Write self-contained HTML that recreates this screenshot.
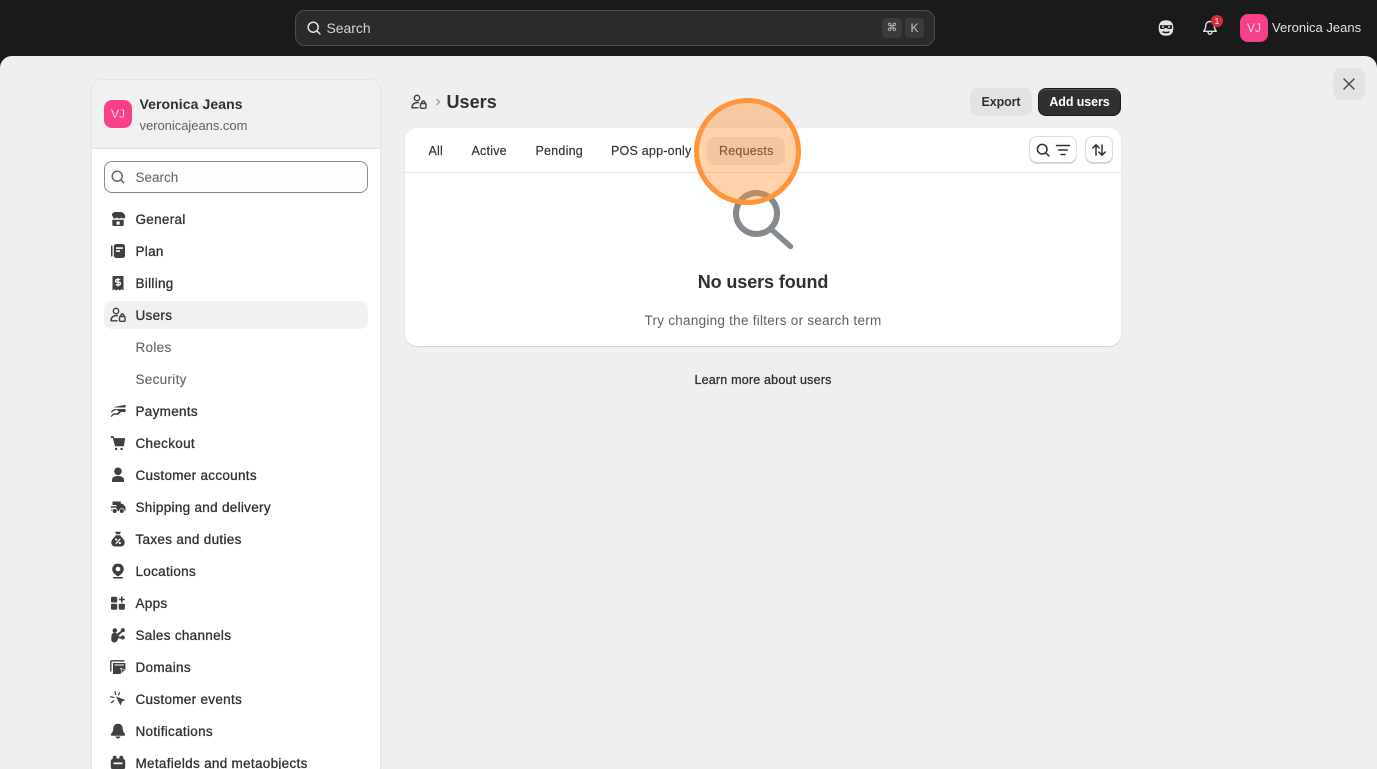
<!DOCTYPE html>
<html><head><meta charset="utf-8">
<style>
*{box-sizing:border-box}
html,body{margin:0;padding:0;width:1377px;height:769px;overflow:hidden;background:#1a1a1a;font-family:"Liberation Sans",sans-serif;color:#303030}
#r{position:relative;width:1377px;height:769px;overflow:hidden;background:#1a1a1a}
.a{position:absolute}
.t{position:absolute;white-space:nowrap;line-height:16px;font-size:13px;letter-spacing:.28px;font-weight:400}
.nav{position:absolute;left:135.5px;white-space:nowrap;font-size:13.5px;line-height:16px;letter-spacing:.3px;color:#303030;-webkit-text-stroke:.3px #303030}
.sub{color:#616161;-webkit-text-stroke:.1px #616161}
.tab{font-size:12.5px;letter-spacing:.22px;color:#303030;top:143px;-webkit-text-stroke:.15px #303030}
svg{position:absolute;display:block}
</style></head>
<body><div id="r">
<!-- top bar -->
<div class="a" style="left:295px;top:10px;width:640px;height:36px;background:#2b2b2b;border:1px solid #4a4a4a;border-radius:10px"></div>
<svg style="left:306px;top:20px" width="16" height="16" viewBox="0 0 16 16" fill="none" stroke="#e3e3e3" stroke-width="1.5" stroke-linecap="round"><circle cx="7.2" cy="7.2" r="5"/><path d="M11 11l3 3"/></svg>
<div class="t" style="left:326.5px;top:20px;color:#d4d4d4;font-size:14px;letter-spacing:-.05px">Search</div>
<div class="a" style="left:882px;top:18px;width:20px;height:20px;background:#3b3b3b;border-radius:4px;color:#c4c4c4;font-size:11px;line-height:20px;text-align:center;font-family:'DejaVu Sans',sans-serif">⌘</div>
<div class="a" style="left:905px;top:18px;width:19px;height:20px;background:#3b3b3b;border-radius:4px;color:#c4c4c4;font-size:12px;line-height:20px;text-align:center">K</div>
<svg style="left:1157px;top:19px" width="18" height="18" viewBox="0 0 18 18"><path d="M9 1.200c4.800 0 7.300 2.400 7.300 7.800s-2.500 7.800-7.300 7.800-7.300-2.400-7.300-7.800S4.200 1.200 9 1.200z" fill="#e3e3e3"/><path d="M3 6.300h12v2.300c0 .8-.6 1.400-1.400 1.400h-2.200c-1 0-1.500-1.200-2.400-1.200s-1.400 1.200-2.400 1.200H4.400C3.600 10 3 9.400 3 8.600z" fill="#1a1a1a"/><circle cx="6" cy="8" r="1" fill="#e3e3e3"/><circle cx="12" cy="8" r="1" fill="#e3e3e3"/><path d="M5.500 12.800c2.300 1 4.700 1 7 0" fill="none" stroke="#1a1a1a" stroke-width="1.400"/></svg>
<svg style="left:1202px;top:20px" width="16" height="16" viewBox="0 0 16 16" fill="none" stroke="#e3e3e3" stroke-width="1.400" stroke-linejoin="round"><path d="M8 1.500c-2.800 0-4.300 2-4.300 4.500 0 2.500-1 4-2 5.300h12.600c-1-1.300-2-2.800-2-5.300 0-2.500-1.500-4.500-4.300-4.500z"/><path d="M6 12c0 3 4 3 4 0"/></svg>
<div class="a" style="left:1211px;top:15px;width:12px;height:12px;border-radius:50%;background:#d72c3d;color:#fff;font-size:8.5px;line-height:12px;text-align:center">1</div>
<div class="a" style="left:1240px;top:14px;width:28px;height:28px;border-radius:8px;background:#f8408a;color:#ffd9e8;font-size:12px;line-height:28px;text-align:center">VJ</div>
<div class="t" style="left:1272px;top:20px;color:#e3e3e3;letter-spacing:.02px">Veronica Jeans</div>

<!-- main surface -->
<div class="a" style="left:0;top:56px;width:1377px;height:713px;background:#efefef;border-radius:12px 12px 0 0"></div>
<div class="a" style="left:1333px;top:68px;width:32px;height:32px;border-radius:8px;background:#e3e3e3"></div>
<svg style="left:1341px;top:76px" width="16" height="16" viewBox="0 0 16 16" stroke="#4a4a4a" stroke-width="1.500" stroke-linecap="round"><path d="M3 3l10 10M13 3L3 13"/></svg>

<!-- sidebar -->
<div class="a" style="left:91px;top:79px;width:290px;height:700px;background:#fff;border:1px solid #e3e3e3;border-radius:12px;overflow:hidden">
<div style="height:69px;background:#f0f0f0;border-bottom:1px solid #dedede"></div>
</div>
<div class="a" style="left:104px;top:100px;width:28px;height:28px;border-radius:8px;background:#f8408a;color:#ffd0e2;font-size:12px;line-height:28px;text-align:center">VJ</div>
<div class="t" style="left:139.5px;top:96px;font-size:14px;font-weight:700;letter-spacing:.08px;color:#303030">Veronica Jeans</div>
<div class="t" style="left:139.5px;top:118px;color:#616161;font-size:13px;letter-spacing:-.03px">veronicajeans.com</div>
<div class="a" style="left:104px;top:161px;width:264px;height:32px;background:#fdfdfd;border:1px solid #8a8a8a;border-radius:8px"></div>
<svg style="left:110px;top:169px" width="16" height="16" viewBox="0 0 16 16" fill="none" stroke="#616161" stroke-width="1.400" stroke-linecap="round"><circle cx="7.200" cy="7.200" r="5"/><path d="M11 11l2.700 2.700"/></svg>
<div class="t" style="left:135.5px;top:169.5px;color:#616161;font-size:13.5px;letter-spacing:0">Search</div>
<div class="a" style="left:104px;top:301px;width:264px;height:28px;background:#f1f1f1;border-radius:8px"></div>

<div class="nav" style="top:211.500px">General</div>
<div class="nav" style="top:243.500px">Plan</div>
<div class="nav" style="top:275.500px">Billing</div>
<div class="nav" style="top:307.500px">Users</div>
<div class="nav sub" style="top:339.500px">Roles</div>
<div class="nav sub" style="top:371.500px">Security</div>
<div class="nav" style="top:403.500px">Payments</div>
<div class="nav" style="top:435.500px">Checkout</div>
<div class="nav" style="top:467.500px">Customer accounts</div>
<div class="nav" style="top:499.500px">Shipping and delivery</div>
<div class="nav" style="top:531.500px">Taxes and duties</div>
<div class="nav" style="top:563.500px">Locations</div>
<div class="nav" style="top:595.500px">Apps</div>
<div class="nav" style="top:627.500px">Sales channels</div>
<div class="nav" style="top:659.500px">Domains</div>
<div class="nav" style="top:691.500px">Customer events</div>
<div class="nav" style="top:723.500px">Notifications</div>
<div class="nav" style="top:755.500px">Metafields and metaobjects</div>

<!-- sidebar icons -->
<svg style="left:110px;top:211px" width="16" height="16" viewBox="0 0 16 16" fill="#404040"><path d="M5.500 1h5c2.700 0 4.800 2.400 4.800 4.800 0 1-.8 1.700-1.800 1.700-.8 0-1.500-.4-1.900-1-.5.600-1.400 1-2.400 1s-1.900-.4-2.400-1c-.5.600-1.200 1-2 1-1.100 0-1.900-.7-1.900-1.700C.7 3.400 2.800 1 5.500 1z"/><path d="M2.300 8.800h11.400v5.100c0 .6-.5 1.100-1.100 1.100H3.400c-.6 0-1.100-.5-1.100-1.100z"/><rect x="6.500" y="10.500" width="3.200" height="3.200" fill="#fff"/></svg>
<svg style="left:110px;top:243px" width="16" height="16" viewBox="0 0 16 16" fill="#404040"><rect x="1" y="2.500" width="1.500" height="11" rx=".6"/><rect x="3.800" y="1" width="11.200" height="14" rx="2.500"/><rect x="6" y="4.300" width="7" height="1.600" fill="#fff"/><rect x="6" y="7.300" width="4" height="1.600" fill="#fff"/></svg>
<svg style="left:110px;top:275px" width="16" height="16" viewBox="0 0 16 16" fill="#404040"><path d="M2.500 1h11v14.500l-1.900-1.300-1.800 1.300-1.800-1.300-1.800 1.300-1.800-1.300-1.900 1.300z"/><path d="M10.300 4.500H7a1.300 1.300 0 0 0 0 2.700h2a1.300 1.300 0 0 1 0 2.700H5.700M8 3v8.500" fill="none" stroke="#fff" stroke-width="1.300"/></svg>
<svg style="left:110px;top:307px" width="16" height="16" viewBox="0 0 16 16" fill="none" stroke="#404040" stroke-width="1.400" stroke-linecap="round" stroke-linejoin="round"><circle cx="6" cy="4" r="2.700"/><path d="M1 13.800c0-3.200 2-5.300 6.500-5.300M1 13.800h6"/><rect x="9.500" y="9.500" width="5.500" height="4.800" rx="1"/><path d="M10.800 9.500V8.500a1.500 1.500 0 0 1 3 0v1"/></svg>
<svg style="left:110px;top:403px" width="16" height="16" viewBox="0 0 16 16" fill="#404040"><path d="M3 4.200L15.500 1.800v2.700H8z"/><path d="M5.500 6h10v3H11L8 11.800H4L1.500 14 .7 13 3.500 10.300h3.700L9 8.500"/><path d="M1 9.200C2 7 3.500 6 6 6l-.5 1.500C4 7.500 3 8 2 9.800z"/></svg>
<svg style="left:110px;top:435px" width="16" height="16" viewBox="0 0 16 16" fill="#404040"><path d="M.8 1.300h2.600l.8 1.800h11l-1.400 8.200H5L2.800 3H.8z"/><rect x="5" y="12.900" width="2.200" height="2"/><rect x="10.500" y="12.900" width="2.200" height="2"/></svg>
<svg style="left:110px;top:467px" width="16" height="16" viewBox="0 0 16 16" fill="#404040"><circle cx="8" cy="4.300" r="3.800"/><path d="M2 15v-1.700C2 10.300 4.500 9 8 9s6 1.300 6 4.300V15z"/></svg>
<svg style="left:110px;top:499px" width="16" height="16" viewBox="0 0 16 16" fill="#404040"><path d="M2.500 2.500h8.300v2.200h2l2.700 3.300v4H1.500V10h5V8.800H.8V7.200h5.700V6h-4z"/><circle cx="4.700" cy="12" r="2.400" stroke="#fff" stroke-width=".8"/><circle cx="11.800" cy="12" r="2.400" stroke="#fff" stroke-width=".8"/></svg>
<svg style="left:110px;top:531px" width="16" height="16" viewBox="0 0 16 16" fill="#404040"><path d="M5 .8h6L9.800 3.200H6.200z"/><path d="M5.800 4.200h4.400l1.500 2c1.800 1.700 3 3.500 3 5.300 0 2.300-1.700 4-3.800 4H5.100c-2.100 0-3.800-1.700-3.800-4 0-1.800 1.200-3.600 3-5.300z"/><path d="M5.800 12.800l4.400-5" stroke="#fff" stroke-width="1.200"/><circle cx="6.200" cy="8.500" r="1.100" fill="#fff"/><circle cx="9.800" cy="12" r="1.100" fill="#fff"/></svg>
<svg style="left:110px;top:563px" width="16" height="16" viewBox="0 0 16 16" fill="#404040"><path d="M8 .6c3.400 0 5.800 2.400 5.800 5.500 0 2.900-2.700 5.400-5.800 7.400-3.100-2-5.800-4.500-5.800-7.400C2.200 3 4.600.6 8 .6z"/><circle cx="8" cy="6" r="2.300" fill="#fff"/><rect x="2.800" y="14" width="10.400" height="1.500" rx=".7"/></svg>
<svg style="left:110px;top:595px" width="16" height="16" viewBox="0 0 16 16" fill="#404040"><rect x="1" y="1.800" width="6.200" height="5.700" rx="1.300"/><rect x="1" y="8.800" width="6.200" height="5.900" rx="1.300"/><rect x="8.700" y="8.800" width="6.200" height="5.900" rx="1.300"/><path d="M11 1.500h1.600v2.200h2.200v1.600h-2.200v2.200H11V5.300H8.800V3.700H11z"/></svg>
<svg style="left:110px;top:627px" width="16" height="16" viewBox="0 0 16 16" fill="#404040"><circle cx="4.800" cy="3.500" r="2.300"/><circle cx="12.800" cy="3.200" r="2.100"/><circle cx="12.800" cy="10.500" r="2"/><path d="M1.500 8.500C1.500 7 3 5.800 4.800 5.800c1 0 1.800.5 2.300 1.100l3.800-2.900 1.200 1.300-3.800 3.800 3.500 1-.3 1.700-3.500-.6c0 2.300-1.500 4.300-3.800 4.300-1.600 0-3-1.300-3-3z"/></svg>
<svg style="left:110px;top:659px" width="16" height="16" viewBox="0 0 16 16" fill="none"><path d="M.8 12.500V2.800a1 1 0 0 1 1-1H14.500" stroke="#404040" stroke-width="1.400"/><path d="M3 4h12.400v7h-2.700l-2.200 4H3z" fill="#404040"/><path d="M4.500 6h9.500" stroke="#fff" stroke-width="1"/><path d="M10.500 9.200l5.300 2.300-2.200.8-.9 2.400z" fill="#404040" stroke="#fff" stroke-width=".6"/></svg>
<svg style="left:110px;top:691px" width="16" height="16" viewBox="0 0 16 16" fill="#404040"><path d="M6 5.500l9.500 3.500-3.500 1.500-1.500 4z"/><path d="M5 .8l.8 2.800M.8 5.800l2.800.7M1.500 11.500l2.200-1.700M9.500 1.800L8.500 3.800" stroke="#404040" stroke-width="1.300" stroke-linecap="round" fill="none"/></svg>
<svg style="left:110px;top:723px" width="16" height="16" viewBox="0 0 16 16" fill="#404040"><path d="M8 .8c3.200 0 4.800 2.300 4.800 5.200 0 2.500 1.100 3.600 2.100 4.800.6.800.2 2-.9 2H2c-1.100 0-1.500-1.200-.9-2 1-1.200 2.100-2.300 2.100-4.800C3.200 3.100 4.800.8 8 .8z"/><path d="M5.500 13.500c.3 1.200 1.400 2 2.500 2s2.200-.8 2.500-2z"/></svg>
<svg style="left:110px;top:755px" width="16" height="16" viewBox="0 0 16 16" fill="#404040"><rect x=".8" y="3.500" width="14.400" height="11.500" rx="3"/><rect x="2.800" y=".8" width="3.800" height="4.500" rx="1.700"/><rect x="9.400" y=".8" width="3.800" height="4.500" rx="1.700"/><rect x="3.500" y="7.500" width="9" height="1.700" fill="#fff"/></svg>

<!-- page header -->
<svg style="left:411px;top:94px" width="16" height="16" viewBox="0 0 16 16" fill="none" stroke="#404040" stroke-width="1.400" stroke-linecap="round" stroke-linejoin="round"><circle cx="6" cy="4" r="2.700"/><path d="M1 13.800c0-3.200 2-5.300 6.500-5.300M1 13.800h6"/><rect x="9.500" y="9.500" width="5.500" height="4.800" rx="1"/><path d="M10.800 9.500V8.500a1.500 1.500 0 0 1 3 0v1"/></svg>
<svg style="left:434px;top:96px" width="8" height="12" viewBox="0 0 8 12" fill="none" stroke="#8a8a8a" stroke-width="1.100"><path d="M2.500 3l3 3-3 3"/></svg>
<div class="t" style="left:446.5px;top:92px;font-size:18px;line-height:20px;font-weight:700;letter-spacing:.05px;color:#303030">Users</div>
<div class="a" style="left:970px;top:88px;width:62px;height:28px;border-radius:8px;background:#e3e3e3;color:#303030;font-size:12.5px;font-weight:700;line-height:28px;text-align:center;letter-spacing:-.1px">Export</div>
<div class="a" style="left:1038px;top:88px;width:83px;height:28px;border-radius:8px;background:#303030;border:1px solid #1a1a1a;box-shadow:inset 0 1px 0 #555;color:#fff;font-size:12.5px;font-weight:700;line-height:26px;text-align:center;letter-spacing:-.1px">Add users</div>

<!-- card -->
<div class="a" style="left:405px;top:128px;width:716px;height:218px;background:#fff;border-radius:12px;box-shadow:0 1px 0 #d4d4d4,0 0 1px #cfcfcf"></div>
<div class="a" style="left:405px;top:172px;width:716px;height:1px;background:#e3e3e3"></div>
<div class="t tab" style="left:428.5px">All</div>
<div class="t tab" style="left:471.5px">Active</div>
<div class="t tab" style="left:535.5px">Pending</div>
<div class="t tab" style="left:611px">POS app-only</div>
<div class="a" style="left:707px;top:137px;width:78px;height:28px;border-radius:8px;background:#ebebeb"></div>
<div class="t tab" style="left:719px">Requests</div>
<div class="a" style="left:1029px;top:136px;width:48px;height:28px;border-radius:8px;background:#fff;box-shadow:inset 0 0 0 1px #dcdcdc,inset 0 -1px 0 1px #cfcfcf"></div>
<svg style="left:1035px;top:142px" width="16" height="16" viewBox="0 0 16 16" fill="none" stroke="#303030" stroke-width="1.500" stroke-linecap="round"><circle cx="7.200" cy="7.200" r="4.800"/><path d="M11 11l3 3"/></svg>
<svg style="left:1055px;top:142px" width="16" height="16" viewBox="0 0 16 16" fill="none" stroke="#303030" stroke-width="1.500" stroke-linecap="round"><path d="M1.500 3.500h13M3.700 8h8.600M6 12.500h4"/></svg>
<div class="a" style="left:1085px;top:136px;width:28px;height:28px;border-radius:8px;background:#fff;box-shadow:inset 0 0 0 1px #dcdcdc,inset 0 -1px 0 1px #cfcfcf"></div>
<svg style="left:1091px;top:142px" width="16" height="16" viewBox="0 0 16 16" fill="none" stroke="#303030" stroke-width="1.500" stroke-linecap="round" stroke-linejoin="round"><path d="M5 13V3M1.800 6L5 2.800 8.200 6M11 3v10M7.800 10l3.200 3.200 3.200-3.200"/></svg>

<!-- empty state -->
<svg style="left:725px;top:182px" width="76" height="72" viewBox="0 0 76 72" fill="none" stroke="#858a8e" stroke-width="6" stroke-linecap="round"><circle cx="31.500" cy="31.500" r="20.500"/><path d="M47 48l18.500 16.500" stroke-width="5.500"/></svg>
<div class="t" style="left:405px;width:716px;text-align:center;top:271.5px;line-height:20px;font-size:18px;font-weight:700;letter-spacing:-.1px;color:#303030">No users found</div>
<div class="t" style="left:405px;width:716px;text-align:center;top:312.5px;font-size:13.5px;letter-spacing:.26px;color:#616161">Try changing the filters or search term</div>
<div class="t" style="left:405px;width:716px;text-align:center;top:372px;font-size:12.5px;letter-spacing:.2px;color:#303030;-webkit-text-stroke:.3px #303030">Learn more about users</div>

<!-- highlight -->
<div class="a" style="left:694px;top:98px;width:107px;height:107px;border-radius:50%;background:rgba(255,147,55,.42);border:5px solid #ff9438"></div>
</div></body></html>
